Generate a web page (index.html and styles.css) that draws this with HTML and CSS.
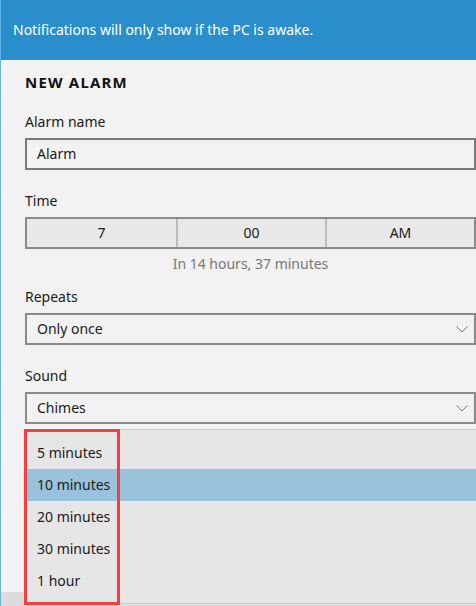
FILE: index.html
```html
<!DOCTYPE html>
<html lang="en">
<head>
<meta charset="utf-8">
<title>New alarm</title>
<link rel="stylesheet" href="styles.css">
</head>
<body>
<div class="app">
  <div class="banner">Notifications will only show if the PC is awake.</div>
  <main class="form">
    <h1 class="title">NEW ALARM</h1>

    <div class="group g-name">
      <label class="label">Alarm name</label>
      <div class="field text">Alarm</div>
    </div>

    <div class="group g-time">
      <label class="label">Time</label>
      <div class="field picker">
        <span class="seg">7</span>
        <span class="seg">00</span>
        <span class="seg">AM</span>
      </div>
      <div class="hint">In 14 hours, 37 minutes</div>
    </div>

    <div class="group g-repeat">
      <label class="label">Repeats</label>
      <div class="field select">
        <span>Only once</span>
        <svg class="chev" width="12" height="7" viewBox="0 0 12 7"><polyline points="0.5,0.5 6,6 11.5,0.5" fill="none" stroke="#7a7a7a" stroke-width="1"/></svg>
      </div>
    </div>

    <div class="group g-sound">
      <label class="label">Sound</label>
      <div class="field select">
        <span>Chimes</span>
        <svg class="chev" width="12" height="7" viewBox="0 0 12 7"><polyline points="0.5,0.5 6,6 11.5,0.5" fill="none" stroke="#7a7a7a" stroke-width="1"/></svg>
      </div>
    </div>
  </main>
  <footer class="bar"></footer>

  <ul class="popup">
    <li class="opt">5 minutes</li>
    <li class="opt sel">10 minutes</li>
    <li class="opt">20 minutes</li>
    <li class="opt">30 minutes</li>
    <li class="opt">1 hour</li>
  </ul>
  <div class="mark"></div>
</div>
</body>
</html>
```

FILE: styles.css
```css
html, body {
  margin: 0;
  padding: 0;
  height: 100%;
  overflow: hidden;
}
body {
  font-family: "Noto Sans", "Open Sans", sans-serif;
  font-size: 14px;
  color: #1a1a1a;
  background: #f2f2f2;
}
.app {
  position: relative;
  height: 100vh;
  display: flex;
  flex-direction: column;
  border-left: 1px solid #62b4ea;
  box-sizing: border-box;
}
.banner {
  height: 60px;
  background: #2a8ecd;
  color: #ffffff;
  font-size: 14px;
  line-height: 60px;
  padding-left: 12px;
  flex: none;
}
.form {
  flex: 1;
  padding-left: 24px;
}
.title {
  margin: 12px 0 0;
  font-size: 15px;
  font-weight: 700;
  line-height: 20px;
  letter-spacing: 1.2px;
  color: #111;
}
.group {
  display: flex;
  flex-direction: column;
}
.g-name { margin-top: 20px; }
.g-time { margin-top: 21px; }
.g-repeat { margin-top: 13px; }
.g-sound { margin-top: 21px; }
.label {
  line-height: 20px;
  margin-bottom: 6px;
}
.field {
  height: 32px;
  box-sizing: border-box;
  border: 2px solid #8a8a8a;
  line-height: 28px;
}
.text {
  border-color: #7a7a7a;
  padding-left: 10px;
}
.picker {
  display: grid;
  grid-template-columns: 1fr 1fr 1fr;
  background: #e9e9e9;
}
.seg {
  text-align: center;
  border-left: 2px solid #bdbdbd;
}
.seg:first-child { border-left: none; }
.hint {
  text-align: center;
  color: #777;
  line-height: 20px;
  margin-top: 5px;
}
.select {
  display: flex;
  align-items: center;
  justify-content: space-between;
  padding: 0 6px 0 10px;
}
.chev { display: block; }
.bar {
  height: 14px;
  background: #dcdcdc;
  flex: none;
}
.popup {
  position: absolute;
  left: 24px;
  right: 0;
  top: 429px;
  margin: 0;
  padding: 7px 0 6px;
  list-style: none;
  background: #e6e6e6;
  border-top: 1px solid #cccccc;
  border-bottom: 1px solid #cccccc;
}
.opt {
  height: 32px;
  line-height: 32px;
  padding-left: 12px;
}
.opt.sel { background: #99c3dc; }
.mark {
  position: absolute;
  left: 23px;
  top: 429px;
  width: 96px;
  height: 176px;
  box-sizing: border-box;
  border: 3px solid #fb3c3c;
}
```
